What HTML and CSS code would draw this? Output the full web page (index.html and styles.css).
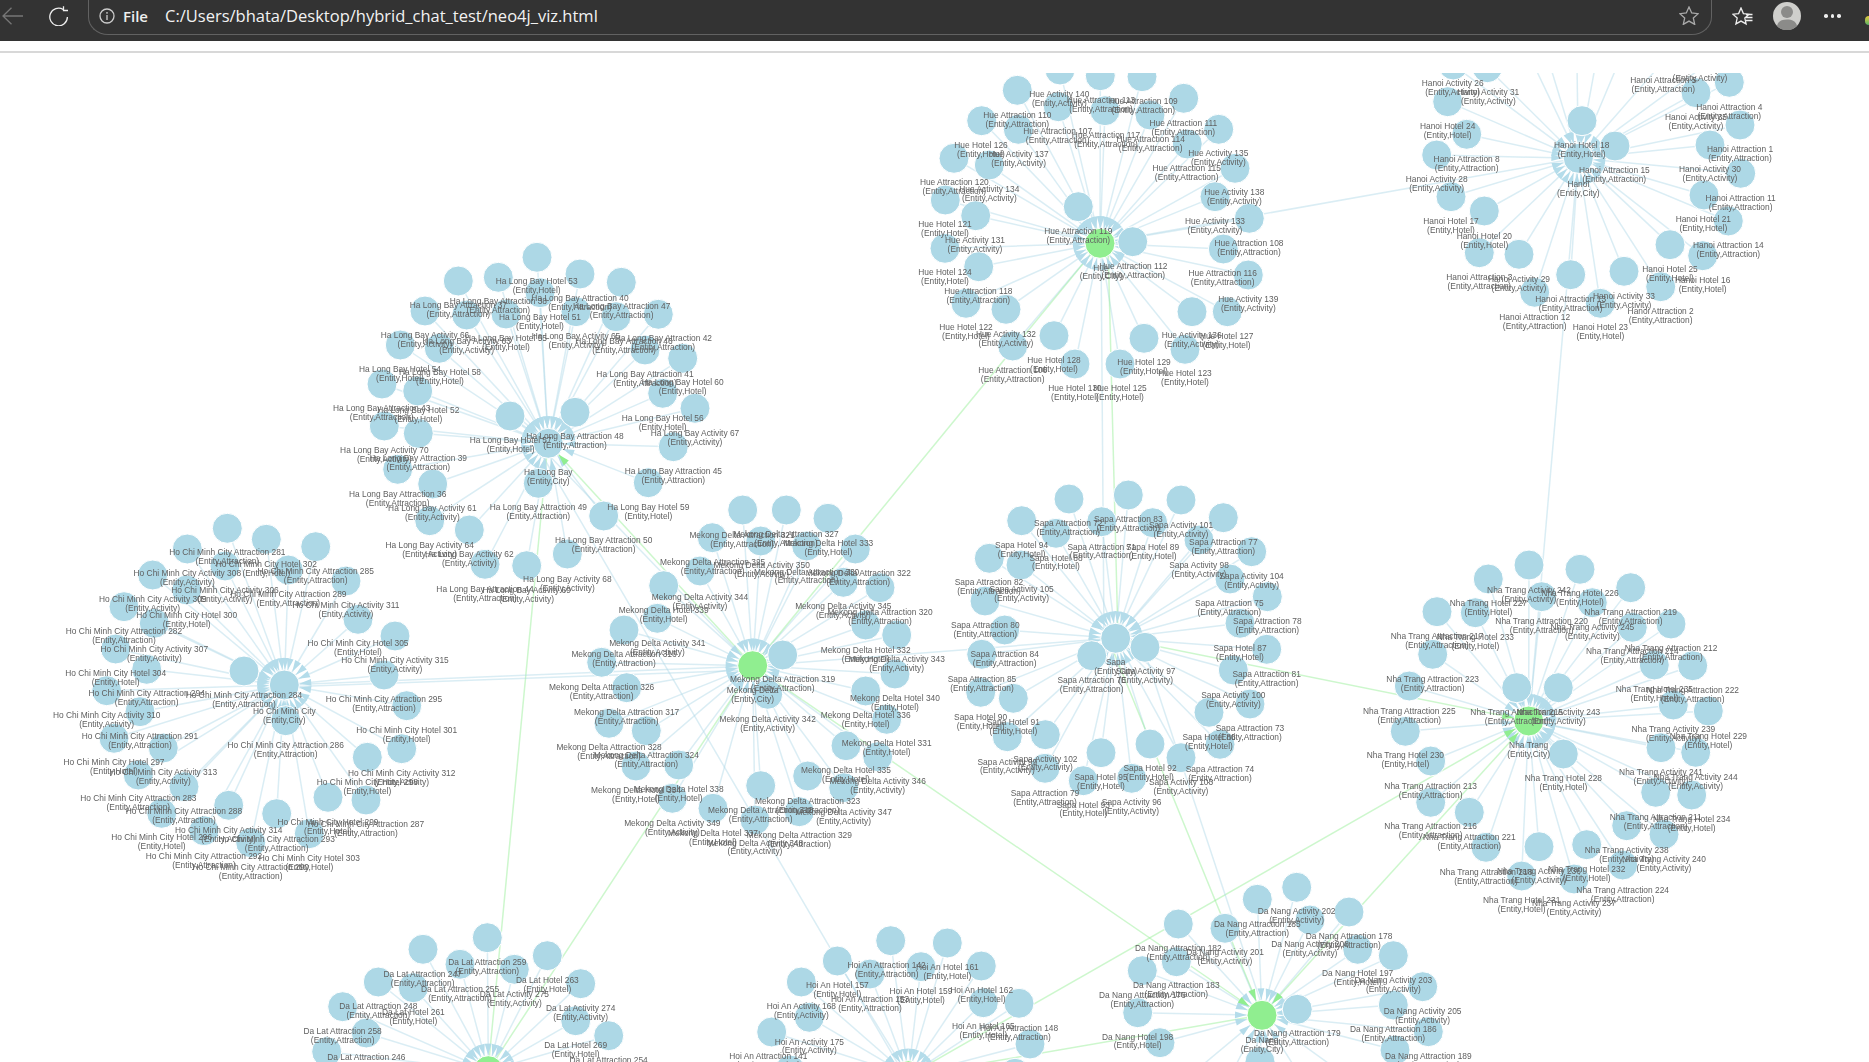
FILE: index.html
```html
<!DOCTYPE html>
<html lang="en">
<head>
<meta charset="utf-8">
<title>neo4j_viz.html</title>
<link rel="stylesheet" href="styles.css">
</head>
<body>
<header class="toolbar">
  <svg class="icon back" viewBox="0 0 21 18"><path d="M21 9H1M9.500 .8 1 9l8.500 8.200"/></svg>
  <svg class="icon reload" viewBox="0 0 21 20"><path d="M15.200 3.500A8.800 8.800 0 1 0 19.400 11M15.500 .2v4.300H20"/></svg>
  <div class="address">
    <svg class="icon info" viewBox="0 0 16 16"><circle cx="8" cy="8" r="7"/><path d="M8 7v5M8 4v1.700"/></svg>
    <span class="scheme">File</span>
    <span class="url">C:/Users/bhata/Desktop/hybrid_chat_test/neo4j_viz.html</span>
    <svg class="icon star" viewBox="0 0 20 19"><path d="M10 1l2.700 6 6.500.7-4.900 4.300 1.400 6.400L10 15.100l-5.700 3.300 1.400-6.400L.8 7.700 7.300 7z"/></svg>
  </div>
  <svg class="icon favs" viewBox="0 0 21 19"><path d="M9 1l2.400 5.600 5.800.6-4.400 3.900 1.300 5.800L9 14.100l-5.100 2.800 1.300-5.800L.8 7.200l5.800-.6zM14 7.500h6.500M14 10.500h6.500M14 13.500h6.500"/></svg>
  <svg class="avatar" viewBox="0 0 28 28"><circle class="avatar-bg" cx="14" cy="14" r="14"/><circle class="avatar-fg" cx="14" cy="10" r="6"/><path class="avatar-fg" d="M4 24c1-5 5-6.500 10-6.500S23 19 24 24a14 14 0 0 1-20 0z"/></svg>
  <div class="dots"><i></i><i></i><i></i></div>
  <span class="edge-logo"></span>
</header>
<div class="gap"></div>
<main class="canvas">
  <svg id="graph" class="graph" viewBox="0 73 1869 989" width="1869" height="989" xmlns="http://www.w3.org/2000/svg"></svg>
</main>
<script src="script.js"></script>
</body>
</html>
```
FILE: styles.css
```css
* { box-sizing: border-box; }
html, body { margin: 0; padding: 0; background: #fff; overflow: hidden; }
body { width: 1869px; height: 1062px; font-family: "Liberation Sans", Arial, sans-serif; }

.toolbar {
  height: 41px;
  background: #333;
  display: flex;
  align-items: center;
  padding: 0 0 9px 2px;
  color: #fff;
}
.icon { fill: none; stroke-width: 1.3; flex: none; }
.back { width: 21px; height: 18px; stroke: #777; margin-right: 25px; }
.reload { width: 21px; height: 20px; stroke: #eee; margin-right: 19px; }
.address {
  width: 1624px;
  height: 36px;
  margin-top: 2px;
  flex: none;
  border: 1px solid #626262;
  border-top-color: transparent;
  border-radius: 0 0 20px 20px / 0 0 18px 18px;
  display: flex;
  align-items: center;
  padding: 0 0 3px 10px;
}
.info { width: 16px; height: 16px; stroke: #ccc; margin-right: 8px; }
.scheme { font: 600 15px "Open Sans", sans-serif; color: #eee; width: 42px; flex: none; }
.url { font: 400 16.5px "Open Sans", sans-serif; color: #f2f2f2; flex: 1; }
.star { width: 20px; height: 19px; stroke: #aaa; margin-right: 12px; }
.favs { width: 21px; height: 19px; stroke: #eee; margin-left: 20px; }
.avatar { width: 28px; height: 28px; margin-left: 20px; flex: none; }
.avatar-bg { fill: #cfcfcc; }
.avatar-fg { fill: #8b8b89; }
.dots { display: flex; gap: 3px; margin-left: 23px; }
.dots i { width: 3.5px; height: 3.5px; border-radius: 50%; background: #eee; }
.edge-logo { width: 4px; height: 9px; margin-left: 24px; background: linear-gradient(#e6c93a, #58b368); border-radius: 4px 0 0 4px; margin-top: 9px; }

.gap { height: 32px; position: relative; background: #fff; }
.gap::before { content: ""; display: block; height: 2px; margin-top: 10px; background: #d8d8d8; position: absolute; left: 0; right: 0; }

.canvas { height: 989px; overflow: hidden; }
.graph { display: block; filter: blur(.45px); }
.link { fill: none; stroke: #add8e6; stroke-width: 1.5; stroke-opacity: .45; }
.link-city { stroke: #90ee90; stroke-opacity: .45; }
.arrow { fill: #b4dcea; }
.arrow-city { fill: #90ee90; }
.node { fill: #add8e6; stroke: #fff; stroke-width: 1; }
.node-city { fill: #90ee90; }
.label { font-family: "Liberation Sans", Arial, sans-serif; font-size: 8.4px; fill: #606060; text-anchor: middle; }
```
FILE: script.js
```js
var clusters = [
{ city:'Hue', o:[900,70], c:[600,520], green:true,
  nodes:'480,0 601,17 726,20 352,61 851,85 475,110 615,122 750,135 245,152 355,178 956,178 862,222 162,265 268,285 1005,295 136,390 945,380 227,437 1048,445 535,410 698,515 135,535 970,537 236,590 1045,615 198,700 318,718 876,725 982,725 462,797 732,805 338,828 855,838 525,882 660,882',
  labels:[['Activity 140',478,72],['Attraction 113',603,90],['Attraction 109',730,93],['Attraction 110',352,135],['Attraction 111',850,160],['Attraction 107',473,184],['Attraction 117',618,196],['Attraction 114',752,208],['Hotel 126',243,226],['Activity 137',356,252],['Activity 135',955,250],['Attraction 115',860,295],['Attraction 120',163,337],['Activity 134',268,358],['Activity 138',1003,367],['Hotel 121',135,462],['Activity 133',945,453],['Attraction 119',535,484],['Activity 131',225,510],['Attraction 108',1047,519],['',603,593],['Attraction 112',700,589],['Hotel 124',135,606],['Attraction 116',968,609],['Attraction 118',235,664],['Activity 139',1045,687],['Hotel 122',198,771],['Activity 132',318,792],['Activity 136',875,795],['Hotel 127',980,798],['Hotel 128',462,870],['Hotel 129',732,876],['Hotel 123',855,909],['Attraction 106',338,900],['Hotel 130',525,954],['Hotel 125',660,954]] },
{ city:'Hanoi', o:[1400,70], c:[535,265],
  nodes:'160,-15 262,-7 888,68 988,37 143,95 1020,165 546,152 645,228 200,193 110,255 930,225 1022,310 912,375 153,380 253,423 985,453 810,524 908,557 238,548 357,553 512,614 672,604 782,650 404,667 601,700 380,-60 430,-80 530,-90 600,-90 680,-80 820,-60 950,-40',
  labels:[['Activity 26',158,40],['Activity 31',265,67],['Attraction 5',790,30],['Activity 27',900,-2],['Attraction 4',988,112],['Activity 35',888,142],['Hotel 24',143,168],['Hotel 18',545,225],['Attraction 8',200,268],['Attraction 1',1020,238],['Activity 30',930,298],['Attraction 15',643,300],['Activity 28',110,328],['',535,342],['Attraction 11',1022,385],['Hotel 21',910,447],['Hotel 17',153,454],['Hotel 20',253,498],['Attraction 14',985,526],['Hotel 25',810,597],['Attraction 3',238,622],['Activity 29',357,628],['Hotel 16',908,630],['Activity 33',672,678],['Attraction 13',512,688],['Attraction 2',782,723],['Attraction 12',404,742],['Hotel 23',601,771]] },
{ city:'Ha Long Bay', o:[320,230], c:[685,640],
  nodes:'651,82 535,142 780,132 415,153 904,157 660,188 315,243 1015,253 440,255 558,252 768,245 888,260 241,345 358,355 975,360 1088,385 186,462 293,483 1028,490 1125,535 570,558 765,547 193,588 295,610 1060,650 233,718 338,762 655,760 985,758 329,872 448,900 851,858 495,1003 620,1007 742,972',
  labels:[['Hotel 53',650,153],['Attraction 37',415,226],['Attraction 38',535,214],['Attraction 40',780,204],['Attraction 47',905,228],['Hotel 51',660,261],['Activity 66',315,316],['Activity 63',440,333],['Hotel 55',558,325],['Activity 65',768,319],['Attraction 46',912,333],['Attraction 42',1030,325],['Hotel 54',240,418],['Hotel 58',360,427],['Attraction 41',975,432],['Hotel 60',1088,456],['Attraction 43',185,535],['Hotel 52',295,540],['Hotel 56',1028,564],['Attraction 48',765,618],['Hotel 57',572,631],['Activity 67',1125,610],['Activity 70',193,661],['Attraction 39',295,685],['Attraction 45',1060,724],['',685,727],['Attraction 36',233,793],['Activity 61',337,835],['Attraction 49',655,832],['Hotel 59',985,831],['Activity 64',329,946],['Activity 62',448,973],['Attraction 50',851,930],['Activity 68',742,1047],['Attraction 44',495,1077],['Activity 69',620,1080]] },
{ city:'Ho Chi Minh City', o:[40,510], c:[733,525],
  nodes:'562,55 679,88 827,110 442,117 555,168 745,180 338,195 918,213 440,240 252,290 343,340 954,328 1065,378 227,417 320,478 612,483 1032,495 200,542 300,605 1100,587 737,632 222,685 370,714 982,742 1085,716 295,795 432,830 864,862 978,870 566,886 710,911 365,910 492,962 632,998 808,971',
  labels:[['Attraction 281',562,126],['Hotel 302',679,162],['Attraction 285',827,184],['Activity 308',442,189],['Activity 306',555,241],['Attraction 289',745,253],['Activity 311',918,286],['Activity 309',338,268],['Hotel 300',440,316],['Attraction 282',252,364],['Activity 307',343,418],['Hotel 305',954,400],['Activity 315',1065,451],['Hotel 304',227,490],['Attraction 294',320,550],['Attraction 284',612,556],['Attraction 295',1032,568],['Activity 310',200,616],['',733,604],['Attraction 291',300,679],['Attraction 286',737,706],['Hotel 301',1100,661],['Hotel 297',222,757],['Activity 313',370,787],['Activity 312',1085,790],['Hotel 298',982,817],['Attraction 283',295,865],['Attraction 288',432,904],['Activity 314',566,960],['Hotel 299',864,937],['Attraction 287',978,943],['Hotel 296',365,982],['Attraction 293',710,988],['Attraction 292',492,1039],['Hotel 303',808,1044],['Attraction 290',632,1072]] },
{ city:'Mekong Delta', o:[560,490], c:[578,527], green:true,
  nodes:'548,60 679,60 804,85 457,143 602,153 740,168 886,177 420,243 311,287 850,277 960,293 292,385 192,420 917,405 1010,435 125,517 668,495 1005,552 200,593 917,603 623,613 147,700 259,722 980,688 858,767 953,800 356,825 228,828 743,858 851,893 602,887 337,925 459,955 718,965 585,990',
  labels:[['Attraction 321',546,135],['Attraction 327',678,132],['Hotel 333',805,159],['Attraction 325',458,217],['Activity 350',605,226],['Attraction 330',740,245],['Attraction 322',895,250],['Activity 344',420,321],['Hotel 339',311,360],['Activity 345',850,348],['Attraction 320',960,367],['Activity 341',292,460],['Attraction 316',192,492],['Hotel 332',917,481],['Activity 343',1010,507],['Attraction 319',668,567],['',578,600],['Attraction 326',125,591],['Hotel 340',1005,625],['Attraction 317',200,666],['Activity 342',623,688],['Hotel 336',917,676],['Hotel 331',980,760],['Attraction 328',147,772],['Attraction 324',259,796],['Hotel 335',858,840],['Activity 346',953,873],['Hotel 334',228,900],['Hotel 338',356,897],['Attraction 323',743,933],['Attraction 318',602,961],['Activity 347',851,966],['Activity 349',337,999],['Hotel 337',459,1029],['Attraction 329',718,1036],['Activity 348',585,1058]] },
{ city:'Sapa', o:[940,480], c:[527,475],
  nodes:'387,57 565,45 723,60 850,113 245,122 485,125 638,128 348,160 777,180 935,215 148,235 243,255 870,297 135,363 982,350 194,450 900,430 980,508 125,523 880,570 615,502 455,527 122,637 220,655 807,697 930,672 316,764 202,770 840,793 483,818 630,792 723,833 315,865 430,902 575,895',
  labels:[['Attraction 72',385,130],['Attraction 83',565,118],['Activity 101',723,135],['Attraction 77',850,187],['Hotel 94',245,195],['Attraction 71',485,200],['Hotel 89',638,202],['Hotel 88',348,233],['Activity 98',777,256],['Activity 104',935,288],['Attraction 82',147,307],['Activity 105',245,328],['Attraction 75',868,370],['Attraction 78',982,424],['Attraction 80',136,436],['Attraction 84',194,522],['Hotel 87',900,505],['Attraction 81',980,582],['',527,547],['Activity 97',617,574],['Attraction 76',455,600],['Attraction 85',126,598],['Activity 100',880,646],['Hotel 90',122,711],['Hotel 91',220,727],['Attraction 73',930,745],['Hotel 86',807,772],['Activity 99',202,845],['Activity 102',316,836],['Hotel 92',630,864],['Hotel 95',483,891],['Attraction 74',840,868],['Activity 103',723,907],['Attraction 79',315,940],['Activity 96',575,967],['Hotel 93',430,974]] },
{ city:'Nha Trang', o:[1360,550], c:[506,513], green:true,
  nodes:'507,45 660,58 385,87 812,113 231,185 545,140 697,158 346,188 817,232 933,222 218,313 883,345 998,347 470,413 595,413 148,408 136,544 940,465 1045,483 610,612 212,633 903,593 1007,607 212,757 328,787 887,727 995,735 800,827 912,853 378,892 537,890 680,884 788,945 485,978 642,987',
  labels:[['Activity 242',507,120],['Hotel 226',660,130],['Hotel 227',385,160],['Attraction 219',812,187],['Attraction 220',545,214],['Activity 245',697,232],['Attraction 217',231,259],['Hotel 233',346,261],['Attraction 214',817,304],['Attraction 212',933,295],['Attraction 223',218,388],['Hotel 235',883,418],['Attraction 222',998,421],['Attraction 215',470,487],['Activity 243',595,487],['Attraction 225',148,484],['',506,586],['Hotel 230',136,616],['Activity 239',940,538],['Hotel 229',1045,559],['Hotel 228',610,685],['Attraction 213',212,709],['Activity 241',903,667],['Activity 244',1007,682],['Attraction 211',887,802],['Hotel 234',995,807],['Attraction 216',212,829],['Attraction 221',328,862],['Activity 238',800,901],['Activity 240',912,928],['Attraction 218',378,967],['Activity 236',537,963],['Hotel 232',680,958],['Attraction 224',788,1021],['Hotel 231',485,1051],['Activity 237',642,1060]] },
{ city:'Da Nang', o:[1090,860], c:[516,466], green:true,
  nodes:'620,82 502,118 660,180 777,156 265,192 405,205 259,305 803,268 910,287 157,332 998,380 622,448 910,435 143,458 1015,515 210,548 915,570 510,605 200,730 340,800 450,860 580,860 720,790 840,700',
  labels:[['Activity 202',620,153],['Attraction 185',502,192],['Attraction 178',777,228],['Activity 208',660,252],['Attraction 182',265,264],['Activity 201',405,277],['Hotel 197',803,340],['Activity 203',910,360],['Attraction 183',259,376],['Attraction 176',157,405],['Activity 205',998,454],['Attraction 186',910,508],['Attraction 179',622,520],['Hotel 198',143,530],['',516,540],['Attraction 189',1015,589]] },
{ city:'Hoi An', o:[700,900], c:[625,527], green:true,
  nodes:'572,122 742,129 412,183 844,198 510,222 663,200 304,246 957,310 328,352 850,308 215,396 990,432 270,510 945,520',
  labels:[['Attraction 142',560,195],['Hotel 161',742,201],['Hotel 157',412,256],['Hotel 159',663,274],['Hotel 162',845,271],['Attraction 153',510,298],['Activity 168',304,319],['Hotel 165',850,378],['Attraction 148',957,385],['Activity 175',328,425],['Attraction 141',205,468]] },
{ city:'Da Lat', o:[280,900], c:[625,512], green:true,
  nodes:'622,113 429,148 802,167 540,193 703,208 295,246 902,251 400,263 188,320 887,362 259,399 986,407 140,455',
  labels:[['Attraction 259',622,187],['Attraction 247',428,222],['Hotel 263',802,240],['Attraction 255',540,268],['Activity 275',703,283],['Attraction 248',295,318],['Hotel 261',400,337],['Activity 274',902,324],['Attraction 258',188,393],['Hotel 269',887,436],['Attraction 246',259,471],['Attraction 254',986,480]] }
];

/* Links between cities: [x1,y1,x2,y2,kind].
   kind 0 = blue line, 1 = green line, 2 = green line with arrowhead on the second end, 3 = arrowhead only. */
var cityLinks = [
  [1100,243,753,666,1],[1108,243,1118,638,1],[548,443,488,1071,1],[753,666,548,443,2],
  [753,666,488,1071,1],[753,666,1262,1015,2],[1116,638,1529,721,2],[1108,638,1262,1015,2],
  [1529,721,1262,1015,2],[1262,1015,1529,721,3],[1529,721,908,1076,1],[908,1076,1529,721,3],[1262,1015,908,1076,1],
  [1100,243,1578,158,0],[284,685,753,666,0],[284,687,753,670,0],[753,666,1116,638,0],[1578,158,1529,721,0],
  [1101,243,1104,638,0],[535,443,905,1076,0],[540,446,748,662,0],[1140,638,1265,1015,0]
];

var NS = 'http://www.w3.org/2000/svg';
var svg = document.getElementById('graph');
var layers = {};
['links','arrows','nodes','labels'].forEach(function (k) {
  layers[k] = svg.appendChild(document.createElementNS(NS, 'g'));
});

function el(layer, tag, cls, attrs) {
  var e = document.createElementNS(NS, tag);
  e.setAttribute('class', cls);
  for (var k in attrs) e.setAttribute(k, attrs[k]);
  return layers[layer].appendChild(e);
}

function link(x1, y1, x2, y2, cls) {
  el('links', 'line', 'link' + cls, { x1:x1, y1:y1, x2:x2, y2:y2 });
}

function arrow(fx, fy, tx, ty, cls) {
  var dx = fx - tx, dy = fy - ty, d = Math.hypot(dx, dy) || 1;
  var ux = dx / d, uy = dy / d, tip = 15.5, base = 27, w = 3.4;
  var bx = tx + ux * base, by = ty + uy * base;
  el('arrows', 'polygon', 'arrow' + cls, { points:
    (tx + ux * tip).toFixed(1) + ',' + (ty + uy * tip).toFixed(1) + ' ' +
    (bx - uy * w).toFixed(1) + ',' + (by + ux * w).toFixed(1) + ' ' +
    (bx + uy * w).toFixed(1) + ',' + (by - ux * w).toFixed(1) });
}

function label(x, y, name, type) {
  var t = el('labels', 'text', 'label', { x:x, y:y + 3 });
  t.textContent = name;
  var t2 = el('labels', 'text', 'label', { x:x, y:y + 11.6 });
  t2.textContent = '(Entity,' + type + ')';
}

clusters.forEach(function (c) {
  var ox = c.o[0], oy = c.o[1];
  var cx = ox + c.c[0] / 3, cy = oy + c.c[1] / 3;
  c.nodes.split(' ').forEach(function (p) {
    var xy = p.split(',');
    var x = ox + xy[0] / 3, y = oy + xy[1] / 3;
    link(x, y, cx, cy, '');
    arrow(x, y, cx, cy, '');
    el('nodes', 'circle', 'node', { cx:x.toFixed(1), cy:y.toFixed(1), r:15 });
  });
  el('nodes', 'circle', c.green ? 'node node-city' : 'node', { cx:cx.toFixed(1), cy:cy.toFixed(1), r:15 });
  c.labels.forEach(function (l) {
    var x = ox + l[1] / 3, y = oy + l[2] / 3;
    if (l[0]) label(x, y, c.city + ' ' + l[0], l[0].split(' ')[0]);
    else label(x, y, c.city, 'City');
  });
});

cityLinks.forEach(function (l) {
  var kind = l[4];
  if (kind !== 3) link(l[0], l[1], l[2], l[3], kind ? ' link-city' : '');
  if (kind >= 2) arrow(l[0], l[1], l[2], l[3], ' arrow-city');
});
```
